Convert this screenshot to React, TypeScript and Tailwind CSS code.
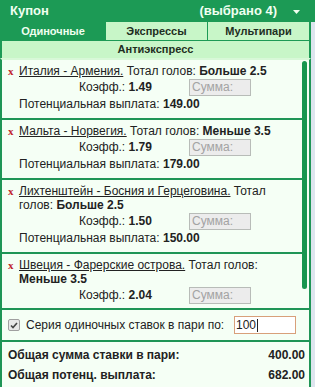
import React from "react";

type Bet = {
  match: string;
  total: string;
  value: string;
  koef: string;
  payout?: string;
};

const bets: Bet[] = [
  { match: "Италия - Армения.", total: "Тотал голов:", value: "Больше 2.5", koef: "1.49", payout: "149.00" },
  { match: "Мальта - Норвегия.", total: "Тотал голов:", value: "Меньше 3.5", koef: "1.79", payout: "179.00" },
  { match: "Лихтенштейн - Босния и Герцеговина.", total: "Тотал голов:", value: "Больше 2.5", koef: "1.50", payout: "150.00" },
  { match: "Швеция - Фарерские острова.", total: "Тотал голов:", value: "Меньше 3.5", koef: "2.04", payout: "" },
];

function BetItem({ bet, last }: { bet: Bet; last: boolean }) {
  return (
    <div className={`flex pt-[4px] pb-[6px] ${last ? "" : "border-b-2 border-[#1f9556]"}`}>
      <div
        className="w-[17px] shrink-0 pl-[6px] text-[11px] font-bold leading-[14px] text-[#c0242a]"
        style={{ fontFamily: '"Liberation Serif", serif' }}
      >
        x
      </div>
      <div className="flex-1 pr-[4px] text-[12px] text-[#222]">
        <div className="leading-[14px]">
          <span className="underline">{bet.match}</span> {bet.total} <span className="font-bold">{bet.value}</span>
        </div>
        <div className="flex h-[18px] items-center">
          <div className="ml-[60px] w-[110px] leading-[14px]">
            Коэфф.: <span className="font-bold">{bet.koef}</span>
          </div>
          <div className="flex h-[17px] w-[62px] items-center border border-[#b8bcb8] bg-[#ececec] px-[2px] text-[12px] text-[#a3a3a3]">
            Сумма:
          </div>
        </div>
        {bet.payout !== "" && (
          <div className="leading-[16px]">
            Потенциальная выплата: <span className="font-bold">{bet.payout}</span>
          </div>
        )}
      </div>
    </div>
  );
}

export default function App() {
  return (
    <div className="h-[387px] w-[315px] bg-[#dde5ee]" style={{ fontFamily: '"Liberation Sans", Arial, sans-serif' }}>
      {/* header */}
      <div className="flex h-[22px] items-center bg-[#1c9a55] pl-[10px] pr-[15px] text-[12px] font-bold text-[#f0fff0]">
        <span className="text-[13px]">Купон</span>
        <span className="ml-auto text-[13px]">(выбрано 4)</span>
        <svg className="ml-[16px] mt-[2px]" width="7" height="4" viewBox="0 0 7 4">
          <path d="M0 0 H7 L3.5 4 Z" fill="#f0fff0" />
        </svg>
      </div>
      <div className="flex w-[311px] flex-col bg-[#f5fff5]">
        {/* tabs */}
        <div className="flex h-[18px] bg-[#1c9a55] text-[11px] font-bold">
          <div className="flex w-[106px] items-center justify-center text-[#f0fff0]">Одиночные</div>
          <div className="flex w-[101px] items-center justify-center bg-[#c8f6c8] text-[#1e2e22]">Экспрессы</div>
          <div className="ml-[1px] mr-[2px] flex flex-1 items-center justify-center bg-[#c8f6c8] text-[#1e2e22]">Мультипари</div>
        </div>
        <div className="flex h-[18px] items-center justify-center border-x-2 border-t-[1px] border-[#1c9a55] bg-[#c8f6c8] text-[11px] font-bold text-[#1e2e22]">
          Антиэкспресс
        </div>
        {/* list */}
        <div className="flex h-[252px] overflow-hidden border-x-2 border-b-2 border-t-2 border-[#1f9556] border-t-[#d8f8d8] bg-[#f5fff5]">
          <div className="flex-1">
            {bets.map((b, i) => (
              <BetItem key={i} bet={b} last={i === bets.length - 1} />
            ))}
          </div>
          <div className="w-[7px] shrink-0 pt-[1px]">
            <div className="h-[228px] w-[5px] rounded-full bg-[#17964f]" />
          </div>
        </div>
        {/* series */}
        <div className="flex h-[32px] items-center border-x-2 border-b-2 border-[#1f9556] pl-[6px] text-[12px] text-[#222]">
          <div className="flex h-[12px] w-[12px] items-center justify-center rounded-[2px] border border-[#a0a0a0] bg-[#e8e8e8]">
            <svg width="8" height="7" viewBox="0 0 8 7">
              <path d="M1 3.5 L3 5.5 L7 1" stroke="#444" strokeWidth="1.6" fill="none" />
            </svg>
          </div>
          <span className="ml-[6px] whitespace-nowrap">Серия одиночных ставок в пари по:</span>
          <div className="ml-auto mr-[13px] flex h-[18px] w-[62px] items-center border border-[#d8a07a] bg-white pl-[1px] text-[12px] text-[#222]">
            100<span className="ml-[1px] inline-block h-[13px] w-[1px] bg-[#222]" />
          </div>
        </div>
        {/* totals */}
        <div className="h-[45px] border-x-2 border-[#1f9556] pl-[6px] pr-[4px] pt-[3px] text-[12px] font-bold text-[#222]">
          <div className="flex justify-between leading-[20px]">
            <span>Общая сумма ставки в пари:</span>
            <span>400.00</span>
          </div>
          <div className="flex justify-between leading-[20px]">
            <span>Общая потенц. выплата:</span>
            <span>682.00</span>
          </div>
        </div>
      </div>
    </div>
  );
}
